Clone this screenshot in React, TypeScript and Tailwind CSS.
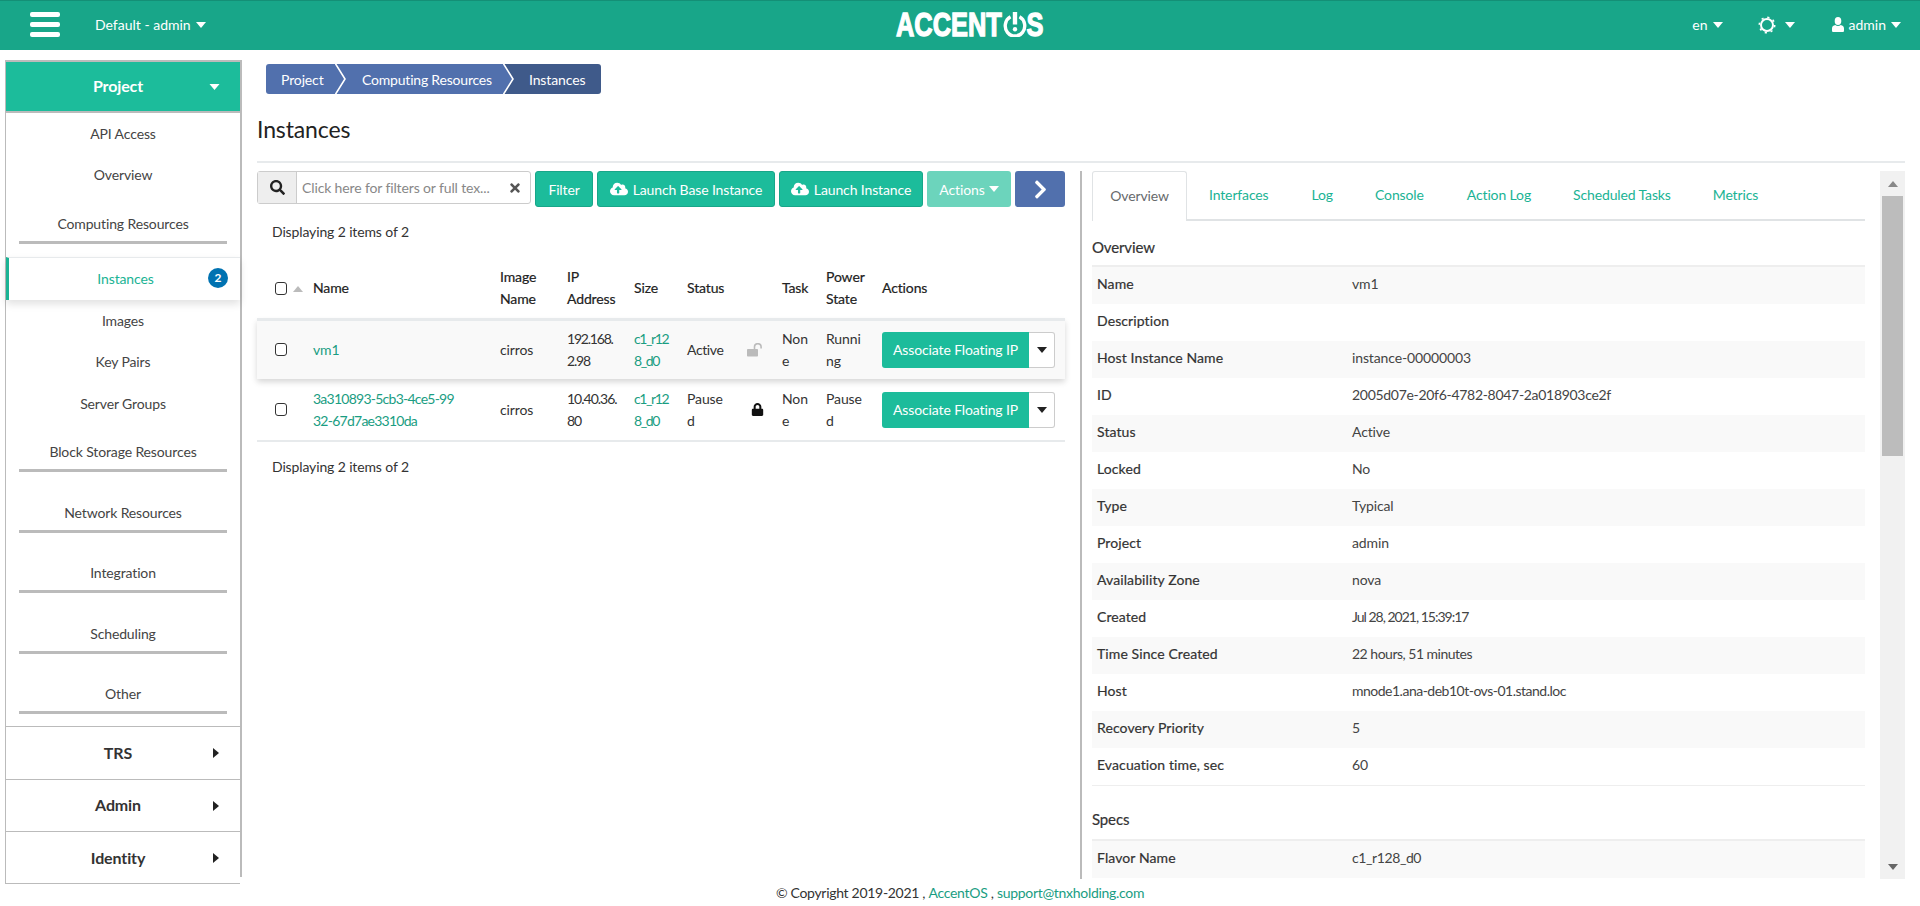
import React from "react";
import { FaSearch, FaTimes, FaCloudUploadAlt, FaLock, FaChevronRight } from "react-icons/fa";

const Caret = ({ className = "" }: { className?: string }) => (
  <svg viewBox="0 0 10 6" className={`w-[10px] h-[6px] fill-current ${className}`}><path d="M0 0h10L5 6z" /></svg>
);

const CaretRight = () => (
  <svg viewBox="0 0 6 10" className="w-[6px] h-[10px] fill-[#222]"><path d="M0 0l6 5-6 5z" /></svg>
);

const SideItem = ({ label, wide }: { label: string; wide?: boolean }) => (
  <div className={`${wide ? "h-[41.3px]" : "h-[41px]"} flex items-center justify-center text-[#444]`}>{label}</div>
);

const SideSection = ({ label, first }: { label: string; first?: boolean }) => (
  <div className={`${first ? "h-[62px] pb-[13px]" : "h-[60.5px] pb-[12px]"} flex flex-col justify-end items-center text-[#444]`}>
    <div className="leading-[20px] mb-[7px]">{label}</div>
    <div className="w-[208px] h-[3px] bg-[#bbb]" />
  </div>
);

const SideGroup = ({ label }: { label: string }) => (
  <div className="h-[52.3px] border-t border-[#bbb] flex items-center relative font-bold text-[16px] text-[#333]">
    <div className="w-[224px] text-center">{label}</div>
    <div className="absolute left-[207px] top-[21px]"><CaretRight /></div>
  </div>
);

const Sidebar = () => (
  <aside className="w-[237px] h-[817px] shrink-0 border-t-2 border-r-2 border-[#bbb]">
    <div className="border-l border-b border-[#bbb]">
      <div className="h-[51px] bg-[#1cbc9b] border-b-2 border-[#bbb] flex items-center relative text-white font-bold text-[16px] pb-[2px]">
        <div className="w-[224px] text-center">Project</div>
        <Caret className="absolute left-[203px] top-[22px] !w-[11px]" />
      </div>
      <SideItem label="API Access" />
      <SideItem label="Overview" />
      <SideSection label="Computing Resources" first />
      <div className="h-[43px] pb-[2px] flex items-center relative border-l-[3px] border-[#1ab394] border-t border-t-[#e7eaec] shadow-[0_4px_8px_rgba(0,0,0,0.12)] text-[#1ab394]">
        <div className="w-[234px] text-center pl-[2px]">Instances</div>
        <span className="absolute left-[199px] top-[10px] w-[20px] h-[20px] rounded-full bg-[#0072b1] text-white text-[12px] font-bold flex items-center justify-center">2</span>
      </div>
      <SideItem label="Images" wide />
      <SideItem label="Key Pairs" wide />
      <SideItem label="Server Groups" wide />
      <SideSection label="Block Storage Resources" />
      <SideSection label="Network Resources" />
      <SideSection label="Integration" />
      <SideSection label="Scheduling" />
      <SideSection label="Other" />
      <SideGroup label="TRS" />
      <SideGroup label="Admin" />
      <SideGroup label="Identity" />
    </div>
  </aside>
);

const Breadcrumb = () => (
  <div className="flex h-[30px] w-[335px] text-white rounded-[3px] overflow-hidden">
    <div className="w-[69px] bg-[#5170ad] flex items-center pl-[15px]">Project</div>
    <svg viewBox="0 0 11 30" className="w-[11px] h-[30px] shrink-0 bg-[#5170ad]"><path d="M0 -1l10 16-10 16" fill="none" stroke="#fff" strokeWidth="1.6" /></svg>
    <div className="w-[157px] bg-[#5170ad] flex items-center pl-[16px] tracking-[-0.2px] whitespace-nowrap">Computing Resources</div>
    <svg viewBox="0 0 11 30" className="w-[11px] h-[30px] shrink-0 bg-[#3f5a8a]"><path d="M0 -1l10 16-10 16z" fill="#5170ad" /><path d="M0 -1l10 16-10 16" fill="none" stroke="#fff" strokeWidth="1.6" /></svg>
    <div className="flex-1 bg-[#3f5a8a] flex items-center pl-[15px]">Instances</div>
  </div>
);

const Btn = ({ className = "", children }: { className?: string; children: React.ReactNode }) => (
  <div className={`h-[36px] rounded-[3px] flex items-center justify-center text-white ${className}`}>{children}</div>
);

const Toolbar = () => (
  <div className="flex gap-[4px] items-start">
    <div className="w-[274px] h-[33px] border border-[#ccc] rounded-[3px] flex items-center bg-white">
      <div className="w-[39px] h-full bg-[#eee] border-r border-[#ccc] flex items-center justify-center text-[#222]"><FaSearch size={15} /></div>
      <div className="flex-1 pl-[5px] text-[#888] truncate">Click here for filters or full tex...</div>
      <FaTimes size={14} className="text-[#555] mx-[8px]" />
    </div>
    <Btn className="w-[58px] bg-[#1cbc9b] border border-[#18a689]">Filter</Btn>
    <Btn className="w-[178px] bg-[#1cbc9b] border border-[#18a689] gap-[5px]"><FaCloudUploadAlt size={18} />Launch Base Instance</Btn>
    <Btn className="w-[144px] bg-[#1cbc9b] border border-[#18a689] gap-[5px]"><FaCloudUploadAlt size={18} />Launch Instance</Btn>
    <Btn className="w-[84px] bg-[#6cd4bc] gap-[4px]">Actions<Caret /></Btn>
    <Btn className="w-[50px] bg-[#5170ad]"><FaChevronRight size={21} /></Btn>
  </div>
);

const ActionBtn = () => (
  <div className="flex h-[36px] w-[173px]">
    <div className="w-[147px] bg-[#1cbc9b] text-white rounded-l-[3px] flex items-center justify-center">Associate Floating IP</div>
    <div className="flex-1 border border-l-0 border-[#ccc] rounded-r-[3px] bg-white flex items-center justify-center text-[#222]"><Caret /></div>
  </div>
);

const Check = () => <div className="w-[12px] h-[13px] border border-[#333] rounded-[3px] bg-white" />;

const thCls = "px-[8px] pb-[2px] font-normal [-webkit-text-stroke:0.2px_currentColor]";

const InstanceTable = () => (
  <table className="w-[808px] table-fixed border-collapse text-[#333] leading-[22px]">
    <colgroup>
      <col className="w-[48px]" /><col className="w-[187px]" /><col className="w-[67px]" /><col className="w-[67px]" /><col className="w-[53px]" /><col className="w-[60px]" /><col className="w-[35px]" /><col className="w-[44px]" /><col className="w-[56px]" /><col />
    </colgroup>
    <thead>
      <tr className="h-[59px] border-b-[3px] border-[#e7eaec] text-left text-[#222]">
        <th className="pl-[18px] font-normal"><div className="flex items-center gap-[6px]"><Check /><Caret className="rotate-180 text-[#bbb]" /></div></th>
        <th className={thCls}>Name</th>
        <th className={thCls}>Image Name</th>
        <th className={thCls}>IP Address</th>
        <th className={thCls}>Size</th>
        <th colSpan={2} className={thCls}>Status</th>
        <th className={thCls}>Task</th>
        <th className={thCls}>Power State</th>
        <th className={thCls}>Actions</th>
      </tr>
    </thead>
    <tbody>
      <tr className="h-[60px] bg-[#f9f9f9] shadow-[0_3px_6px_rgba(0,0,0,0.16)]">
        <td className="pl-[18px]"><Check /></td>
        <td className="px-[8px] text-[#1a9d82]">vm1</td>
        <td className="px-[8px]">cirros</td>
        <td className="px-[8px] tracking-[-1.2px]">192.168.<br />2.98</td>
        <td className="px-[8px] text-[#1a9d82] tracking-[-1.4px]">c1_r12<br />8_d0</td>
        <td className="px-[8px] tracking-[-0.4px]">Active</td>
        <td className="pl-[8px]">
          <svg viewBox="0 0 16 14" className="w-[16px] h-[14px]">
            <rect x="0" y="6" width="11" height="7.5" rx="0.8" fill="#bbb" />
            <path d="M7.5 6V4a3.3 3.3 0 0 1 6.6 0v1.5" fill="none" stroke="#bbb" strokeWidth="1.6" />
          </svg>
        </td>
        <td className="px-[8px]">Non<br />e</td>
        <td className="px-[8px]">Runni<br />ng</td>
        <td className="px-[8px]"><ActionBtn /></td>
      </tr>
      <tr className="h-[62px] border-b-2 border-[#e7eaec]">
        <td className="pl-[18px]"><Check /></td>
        <td className="px-[8px] text-[#1a9d82] tracking-[-0.75px]">3a310893-5cb3-4ce5-99<br />32-67d7ae3310da</td>
        <td className="px-[8px]">cirros</td>
        <td className="px-[8px] tracking-[-1px]">10.40.36.<br />80</td>
        <td className="px-[8px] text-[#1a9d82] tracking-[-1.4px]">c1_r12<br />8_d0</td>
        <td className="px-[8px]">Pause<br />d</td>
        <td className="pl-[12px]"><FaLock size={13} className="text-[#111]" /></td>
        <td className="px-[8px]">Non<br />e</td>
        <td className="px-[8px]">Pause<br />d</td>
        <td className="px-[8px]"><ActionBtn /></td>
      </tr>
    </tbody>
  </table>
);

const overviewRows = [
  { k: "Name", v: "vm1" },
  { k: "Description", v: "" },
  { k: "Host Instance Name", v: "instance-00000003" },
  { k: "ID", v: "2005d07e-20f6-4782-8047-2a018903ce2f", t: "tracking-[-0.3px]" },
  { k: "Status", v: "Active" },
  { k: "Locked", v: "No" },
  { k: "Type", v: "Typical" },
  { k: "Project", v: "admin" },
  { k: "Availability Zone", v: "nova" },
  { k: "Created", v: "Jul 28, 2021, 15:39:17", t: "tracking-[-1px]" },
  { k: "Time Since Created", v: "22 hours, 51 minutes", t: "tracking-[-0.5px]" },
  { k: "Host", v: "mnode1.ana-deb10t-ovs-01.stand.loc", t: "tracking-[-0.5px]" },
  { k: "Recovery Priority", v: "5" },
  { k: "Evacuation time, sec", v: "60" },
];

const Row = ({ k, v, t = "", gray }: { k: string; v: string; t?: string; gray: boolean }) => (
  <div className={`h-[37px] flex items-center pl-[5px] pb-[5px] ${gray ? "bg-[#f9f9f9]" : "bg-white"}`}>
    <div className="w-[255px] text-[#333] [-webkit-text-stroke:0.2px_currentColor] tracking-[0.1px]">{k}</div>
    <div className={`text-[#444] ${t}`}>{v}</div>
  </div>
);

const DetailPane = () => (
  <div className="w-[773px] shrink-0 overflow-hidden h-[708px]">
    <div className="flex h-[50px] pb-[2px] border-b-2 border-[#e0e3e5] text-[#1ab394]">
      <div className="w-[95px] h-[50px] pb-[2px] bg-white border border-b-0 border-[#e0e3e5] rounded-t-[3px] flex items-center justify-center text-[#676a6c]">Overview</div>
      <div className="ml-[22px] flex items-center">Interfaces</div>
      <div className="ml-[43px] flex items-center">Log</div>
      <div className="ml-[42px] flex items-center">Console</div>
      <div className="ml-[43px] flex items-center">Action Log</div>
      <div className="ml-[42px] flex items-center">Scheduled Tasks</div>
      <div className="ml-[42px] flex items-center">Metrics</div>
    </div>
    <div className="h-[46px] flex items-center pt-[8px] border-b-2 border-[#eee] text-[15px] text-[#333] [-webkit-text-stroke:0.2px_currentColor]">Overview</div>
    {overviewRows.map((r, i) => <Row key={r.k} k={r.k} v={r.v} t={r.t} gray={i % 2 === 0} />)}
    <div className="border-t border-[#eee] h-[54px] flex items-end pb-[9px] text-[15px] text-[#333] [-webkit-text-stroke:0.2px_currentColor]">Specs</div>
    <div className="border-t-2 border-[#eee]"><Row k="Flavor Name" v="c1_r128_d0" t="tracking-[-0.4px]" gray /></div>
  </div>
);

const Scrollbar = () => (
  <div className="w-[25px] h-[708px] bg-[#f1f1f1] flex flex-col items-center shrink-0">
    <div className="h-[25px] flex items-center justify-center"><Caret className="rotate-180 text-[#888]" /></div>
    <div className="w-[21px] h-[260px] bg-[#bcbcbc]" />
    <div className="flex-1" />
    <div className="h-[25px] flex items-center justify-center"><Caret className="text-[#666]" /></div>
  </div>
);

export default function App() {
  return (
    <div className="h-[906px] w-[1920px] overflow-hidden bg-white text-[14px] tracking-[-0.13px] font-['Lato','Liberation_Sans',sans-serif]">
      <header className="h-[50px] pb-[2px] bg-[#18a689] border-t border-[#148f76] grid grid-cols-[1fr_auto_1fr] items-center text-white text-[14px] tracking-normal">
        <div className="flex items-center">
          <div className="ml-[30px] w-[30px] flex flex-col gap-[5px]">
            <div className="h-[5px] bg-white rounded-[2px]" />
            <div className="h-[5px] bg-white rounded-[2px]" />
            <div className="h-[5px] bg-white rounded-[2px]" />
          </div>
          <div className="ml-[35px] flex items-center gap-[5px]">Default - admin<Caret /></div>
        </div>
        <div className="ml-[20px] w-[150px] flex justify-center">
          <div className="flex items-center text-[33px] font-bold font-['Liberation_Sans',sans-serif] leading-none scale-x-[0.77] [-webkit-text-stroke:1.3px_white]">
            ACCENT
            <svg viewBox="0 0 24 24" preserveAspectRatio="none" className="w-[31px] h-[25px] ml-[1px]">
              <path d="M7.5 4.6a9.8 9.8 0 1 0 9 0" fill="none" stroke="#fff" strokeWidth="3.4" />
              <path d="M12 0v12" stroke="#fff" strokeWidth="4.4" />
              <circle cx="12" cy="16.5" r="2.2" fill="#fff" />
            </svg>
            S
          </div>
        </div>
        <div className="flex items-center justify-end">
          <div className="flex items-center gap-[5px] mr-[35px]">en<Caret /></div>
          <div className="flex items-center gap-[9px] mr-[37px]">
            <svg viewBox="0 0 18 18" className="w-[18px] h-[18px]" fill="none" stroke="#fff">
              <circle cx="9" cy="9" r="6" strokeWidth="2" />
              <circle cx="9" cy="9" r="7.7" strokeWidth="1.6" strokeDasharray="2.2 3.85" />
            </svg>
            <Caret />
          </div>
          <div className="flex items-center gap-[5px] mr-[19px]">
            <svg viewBox="0 0 12 15" className="w-[12px] h-[15px] fill-white">
              <ellipse cx="6" cy="4" rx="3.3" ry="4" />
              <path d="M1.5 15C.5 15 0 14.4 0 13.4V11.5C0 9.4 1.6 8.4 3.2 8c1.6 1.4 4 1.4 5.6 0C10.4 8.4 12 9.4 12 11.5v1.9c0 1-.5 1.6-1.5 1.6z" />
            </svg>
            admin<Caret />
          </div>
        </div>
      </header>
      <div className="flex h-[828px] pl-[5px] pt-[10px]">
        <Sidebar />
        <main className="ml-[15px] w-[1648px] pt-[4px]">
          <div className="ml-[9px]"><Breadcrumb /></div>
          <h1 className="text-[23px] leading-[30px] mt-[20px] pb-[17px] border-b-2 border-[#e7eaec] text-[#222]">Instances</h1>
          <div className="flex mt-[8px]">
            <div className="w-[823px] shrink-0">
              <Toolbar />
              <div className="pl-[15px] mt-[14px] h-[22px] leading-[22px] text-[#333]">Displaying 2 items of 2</div>
              <div className="mt-[17px]"><InstanceTable /></div>
              <div className="pl-[15px] mt-[14px] leading-[22px] text-[#333]">Displaying 2 items of 2</div>
            </div>
            <div className="w-[2px] h-[708px] bg-[#bbb] shrink-0" />
            <div className="ml-[10px]"><DetailPane /></div>
            <div className="ml-[15px]"><Scrollbar /></div>
          </div>
        </main>
      </div>
      <footer className="h-[28px] flex items-center justify-center text-[#333] tracking-[-0.3px]">
        © Copyright 2019-2021 ,&nbsp;<span className="text-[#1a9d82]">AccentOS</span>&nbsp;,&nbsp;<span className="text-[#1a9d82]">support@tnxholding.com</span>
      </footer>
    </div>
  );
}
